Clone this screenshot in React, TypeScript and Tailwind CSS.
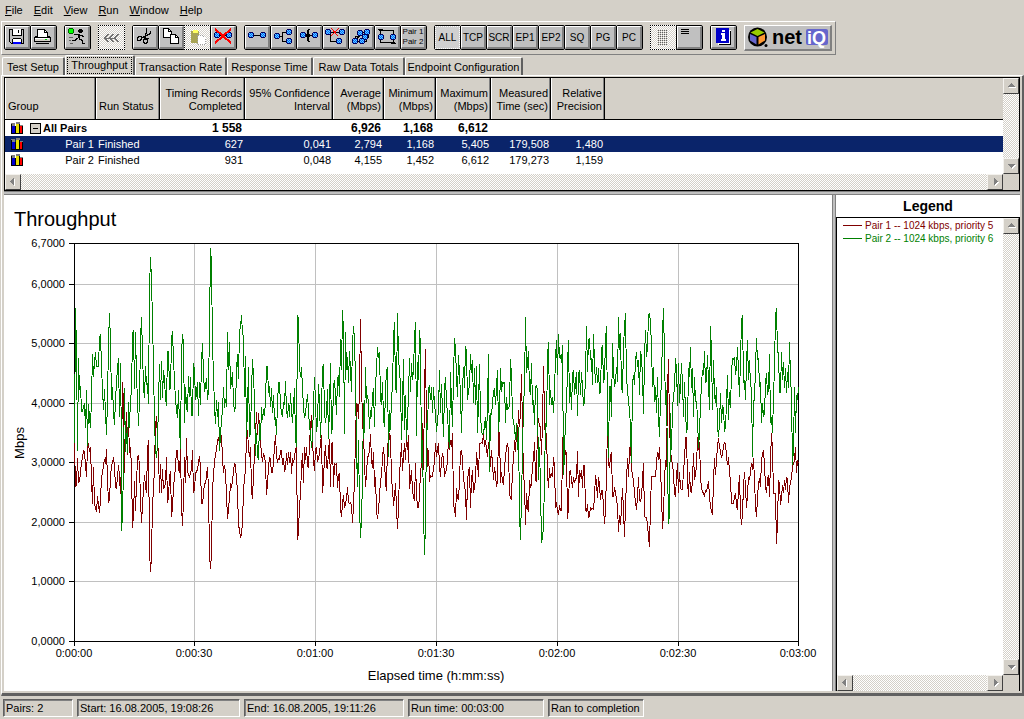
import type { ReactNode } from 'react';
import clsx from 'clsx';

// Each run is [first column, base row, samples]; one sample per column, in thirds of a row
type Run = [number, number, string];

const pair1: Run[] = [
  [74, 200, '730 860 855 775 850 840 820 785 775 750 755 795 832 740 730 755 742 840 912 800 915 922 937 888 915 938'],
  [100, 200, '900 830 820 795 778 793 748 840 908 900 830 795 790 772 800 862 865 830 795 830 883 780'],
  [122, 200, '545 610 818 700 637 765 660 760 740 808 983 945 843 932 855 770 767 795 900 968 920 865 825 862 880 750 720'],
  [149, 200, '1052 1115 1072 905 880 790 680 648 720 765 878 793 880 808 868 860 850 770 908 890 830 812 952 920 865 830'],
  [175, 200, '800 750 750 808 820 745 920 977 900 770 850 715 818 820 835 815 812 750 878 870 820 815 808 790 768 805 908 912 880 850 852 828 800 870'],
  [209, 200, '1065 1108 1060 870 825 785 765 745 725 712 735 725 705 775 820 795 820 880 958 925 895 850 865 840 815 790 795 840 870'],
  [238, 200, '980 985 1015 1000 970 870 835 810 710 690 745 770 740 870 898 820 765 700 637 705 640 680 725 760 785 760 770 790'],
  [266, 200, '885 850 800 770 780 820 815 785 740 705 765 788 775'],
  [279, 280, '540 510 510 555 535 575 565 520 555 515 550 515 583 535 550 530 510 500'],
  [297, 280, '780 755 675 645 560 520 608 500 540 500 555 565 490 440 405 480 545 572 510 500 545 535 520 490 465 638 600 530 495 560 568 510 478'],
  [330, 280, '622 490 488 622 550 555 550 623 585 580 690 710 670 645 685 670 655 622 665 672 668 675 728 675 600 475 370 375 418 330'],
  [360, 280, '117 300 430 460 550 620 580 530 530 508 463 540 565 515 620 590 690 718 690 650 600 590 530 500 540 610 632 490 500 460 470 600 625 677 650 610 685'],
  [397, 280, '748 680 580 545 488 572 530 490 540 468 510 465 628 600 570 635 650 662 550 640 685 680 650 570 560 430 570 330'],
  [425, 280, '207 440 560 510 605 585 590 590 565 545 490 530 510 488 560 590 540 520 535 590 575 570 540 475 510 480 500 460'],
  [453, 280, '675 685 712 625 655 660 600 515 510 540 600 610 640 720 600 575 560 685 600 570 640 620 600 515 550 590 490 490 487 490 460'],
  [484, 280, '500 480 510 530 485 490 560 510 550 600 560 585 620 605 460 455 610 575 605 615 560 530 500 490 510 640 655 660 560 545 480 515 460 480 390 440 395'],
  [521, 280, '283 440 590 610 735 640 680 697 600 625 610 555 540 487 600 605 420 415 440'],
  [540, 280, '440 525 430 258 400 500 460 580 625 565 595 580 590 530 560 685 665 695 705 675 690 690 510'],
  [563, 280, '433 540 510 520 718 680 575 572 600 625 590 610 595 595 512 650 570 590 570 625 555 555 690 695 672 715 705 680 690 685 690 650 585 610 655 590 615 660 630 630 680 733 690 580'],
  [607, 280, '437 550 565 530 515 650 650 620 640 655 680 755 705 735 680 625 690 772 680 600 535 590 515 487 565 585 600 640 665 690 650 590 660 665 650 600 548 710 712 712 735 770'],
  [649, 280, '800 675 590 588 590 590 590 550 515 540 502 570 640 748 700 600 540 560 330'],
  [668, 280, '238 440 510 540 550 580 640 650 590 550 640 575 625 628 628 570 540 475 470 600 650 575 635 637 600 520 600 580 560 470 510 485 590'],
  [701, 280, '625 635 640 650 630 635 620 602 650 680 695 705 600 535 585 540 500 475 500 515 535 520 500 487 490 530 555 530 580 600 670 672 670 650 640 675 690 625 585 700'],
  [741, 280, '735 700 620 575 620 685 640 590 600 575 550 570 535 600 680 712 650 610 595 620 540 525 510 555 620 640 600 585 650 540 460 510 640 640 640'],
  [776, 280, '793 730 600 610 675 650 615 640 600 630 590 600 670 620 610 590 560 550 540 500 580 540 550'],
];

const pair2: Run[] = [
  [74, 200, '730 324 448 752 475 570 558 632 637 618 610 683 570 738 612 655 683 595 462 530 485 457 500 500 500 412 402 500'],
  [102, 200, '570 630 567 640 705 600 425 340 425 600 560 635 675 600 545 505 474 650 490 745'],
  [121, 200, '992 950 800 565 755 700 760 605 683 590 580 400 390 567 395 530 600 678 600 420 352 455 560 595 498 555 550 612'],
  [149, 200, '265 172 240 365 500 665 748 773 735 602 493 600 483 595 510 540 595 618 453 453 568 565 420 392 480 540 600 630 655 570 680 748 465 402 430 668 560 622 635 528 590 530 645 648 490 510 600 580'],
  [197, 200, '545 648 545 615 485 430 520 577 555 535 600 570 385 145 190 440 520 625 672 600 650 607 752 705 660 630 560 625 597 620'],
  [227, 200, '397 510 425 568 545 515 605 636 620 510 462 537 392 380 345 400 412 590 468 710 625 500 712 700 575 478 530 600 768 700 765 780 670 720 620 660 628 647 600'],
  [266, 200, '500 500 580 558 620 565 640 585 660 650 705 610 548'],
  [279, 280, '307 375 400 410 365 375 303 390 415 370 410 340 395 428 375 325 480 500'],
  [297, 280, '105 118 260 290 262 325 380 415 400 370 343 390 440 460 505 470 375 290 365 455 430 312 370 475 385 265 252 400 428 400 328 478 375'],
  [330, 280, '250 463 440 320 300 345 405 295 285 350 178 270 90 150 463 157 270 230 308 213 270 335 190 138 180 300 510 620 480 680'],
  [360, 280, '775 715 600 370 460 262 370 345 370 448 390 410 350 325 442 320 265 202 235 215 355 375 305 415 440 330 270 262 530 390 450 350 325 175 125 320 340'],
  [397, 280, '100 230 280 305 480 370 237 450 345 480 420 345 235 335 250 300 270 175 127 468 245 300 150 195 550 480 700'],
  [424, 280, '825 735 430 450 330 315 360 320 400 320 375 400 455 420 390 270 400 312 390 472 330 290 365 400 465 505 275 365 440 290'],
  [454, 280, '175 205 290 350 225 280 345 458 330 260 325 197 215 360 330 320 222 280 240 370 265 375 258 458 370 252 405 450 465 460 438 410 480 370'],
  [488, 280, '222 575 400 405 370 335 325 375 320 270 455 400 265 335 305 310 305 430 350 390 385 375 237 290 405 430 440 480 430 510 440 700'],
  [520, 280, '780 650 520 370 325 112 280 250 213 325 345 250 375 360 435 320 315 330 600 500'],
  [540, 280, '620 790 770 740 600 430 440 230 187 375 330 375 350 398 330 235 180 285 163 235 225 250 195'],
  [563, 280, '585 525 410 390 255 180 370 310 390 285 270 345 310 275 407 285 270 345 275 320 378 365 290 138 275 180 175 240 235 315 163 250 310 260 310 265 343 335 205 195 310 290 180 138 400'],
  [608, 280, '535 320 320 412 190 270 320 305 260 305 112 210 160 320 340 200 140 100 305 320 375 380 450 550 310 285 315 240 215 260 240 345 212 230 290 403 230 150 230 205 105'],
  [649, 280, '100 125 200 320 262 365 320 400 290 410 472 350 310 155 85 230 375 330 545'],
  [668, 280, '733 700 400 510 385 350 325 235 265 378 250 370 315 250 310 410 305 390 460 440 265 290 202 325 265 410 290 365 365 410 505 455 375'],
  [701, 280, '310 270 285 213 310 300 225 310 390 138 220 390 240 340 370 320 440 470 430 340 430 375 385 455 440 370 285 420 335 385 275 235 240 230 285 260 202 275 350 235'],
  [741, 280, '125 105 310 300 360 250 180 300 240 315 325 530 360 360 260 175 240 235 320 305 430 370 410 400 310 280 345 330 222 430 410 460 350 260 110'],
  [776, 280, '85 215 220 335 340 215 300 245 325 265 340 275 325 187 290 350 555 500 320 460 345 360 320'],
];

const toPoints = (runs: Run[]) =>
  runs
    .flatMap(([x, base, samples]) =>
      samples.split(' ').map((s, i) => `${x + i + 0.5},${(base + Number(s) / 3).toFixed(1)}`)
    )
    .join(' ');

const menus = ['File', 'Edit', 'View', 'Run', 'Window', 'Help'];
const filters = ['ALL', 'TCP', 'SCR', 'EP1', 'EP2', 'SQ', 'PG', 'PC'];

const tabs = [
  { label: 'Test Setup', width: 'w-[63px]' },
  { label: 'Throughput', width: 'w-[70px]', active: true },
  { label: 'Transaction Rate', width: 'w-[92px]' },
  { label: 'Response Time', width: 'w-[86px]' },
  { label: 'Raw Data Totals', width: 'w-[92px]' },
  { label: 'Endpoint Configuration', width: 'w-[118px]' },
];

const columns = [
  { lines: ['Group'], width: 'w-[91px]', left: true },
  { lines: ['Run Status'], width: 'w-[64px]', left: true },
  { lines: ['Timing Records', 'Completed'], width: 'w-[85px]' },
  { lines: ['95% Confidence', 'Interval'], width: 'w-[88px]' },
  { lines: ['Average', '(Mbps)'], width: 'w-[51px]' },
  { lines: ['Minimum', '(Mbps)'], width: 'w-[52px]' },
  { lines: ['Maximum', '(Mbps)'], width: 'w-[55px]' },
  { lines: ['Measured', 'Time (sec)'], width: 'w-[60px]' },
  { lines: ['Relative', 'Precision'], width: 'w-[54px]' },
];

const rows = [
  { name: 'Pair 1', selected: true, values: ['627', '0,041', '2,794', '1,168', '5,405', '179,508', '1,480'] },
  { name: 'Pair 2', selected: false, values: ['931', '0,048', '4,155', '1,452', '6,612', '179,273', '1,159'] },
];

const yTicks = [
  { y: 243, label: '6,7000' },
  { y: 284, label: '6,0000' },
  { y: 343, label: '5,0000' },
  { y: 403, label: '4,0000' },
  { y: 462, label: '3,0000' },
  { y: 522, label: '2,0000' },
  { y: 581, label: '1,0000' },
  { y: 641, label: '0,0000' },
];

const xTicks = [
  { x: 74, label: '0:00:00' },
  { x: 194, label: '0:00:30' },
  { x: 315, label: '0:01:00' },
  { x: 436, label: '0:01:30' },
  { x: 557, label: '0:02:00' },
  { x: 678, label: '0:02:30' },
  { x: 798, label: '0:03:00' },
];

const dither = 'bg-[repeating-conic-gradient(#ffffff_0_25%,#d4d0c8_0_50%)] bg-[length:2px_2px]';

type ToolButtonProps = { label: string; children: ReactNode; disabled?: boolean; pressed?: boolean };

function ToolButton({ label, children, disabled, pressed }: ToolButtonProps) {
  return (
    <button
      type="button"
      aria-label={label}
      aria-pressed={pressed}
      disabled={disabled}
      className={clsx(
        '-mr-px h-[25px] w-[27px] shrink-0 border',
        disabled ? ['border-dotted border-black', dither] : 'rounded-[2px] border-black bg-[#c0c0c0]'
      )}
    >
      <span
        className={clsx(
          'flex h-full w-full items-center justify-center',
          !disabled && !pressed && 'border-t border-r-2 border-b-2 border-l border-t-white border-r-[#808080] border-b-[#808080] border-l-white',
          pressed && 'border border-dotted border-white bg-[#d0d0d0]'
        )}
      >
        {children}
      </span>
    </button>
  );
}

function Icon({ children }: { children: ReactNode }) {
  return (
    <svg width="20" height="20" viewBox="0 0 20 20" fill="none" stroke="#000" shapeRendering="crispEdges" aria-hidden="true">
      {children}
    </svg>
  );
}

// Endpoint node used by all of the pair icons
function Node({ x, y }: { x: number; y: number }) {
  return (
    <g stroke="none" transform={`translate(${x} ${y})`}>
      <path d="M1 0h4v1h1v4h-1v1h-4v-1h-1v-4h1z" fill="#000060" />
      <path d="M1 1h4v4h-4z" fill="#0060ff" />
      <path d="M1 1h1v1h-1zM3 1h1v1h-1zM2 2h1v1h-1zM4 2h1v1h-1zM1 3h1v1h-1zM3 3h1v1h-1zM2 4h1v1h-1zM4 4h1v1h-1z" fill="#60d0ff" />
    </g>
  );
}

function Toolbar() {
  return (
    <div role="toolbar" className="ml-px flex h-[34px] w-[835px] items-start border border-t-white border-r-[#808080] border-b-[#808080] border-l-white pt-[3px] pl-[2px]">
      <div className="mr-2 flex">
        <ToolButton label="Save">
          <Icon>
            <path d="M2 2h15v15h-13l-2-2z" fill="#c0c0c0" stroke="none" />
            <path d="M2.5 2.5h14v14h-12l-2-2z" />
            <path d="M6 2h8v6h-8z" fill="#fff" stroke="none" />
            <path d="M5.5 3v5.500h8.500v-5.500M11.500 3v3M6 11.500h8M5.500 12v4M14.500 12v4" />
            <path d="M6 12h8v3h-8z" fill="#fff" stroke="none" />
            <path d="M6 15h8v2h-8z" fill="#00f" stroke="none" />
          </Icon>
        </ToolButton>
        <ToolButton label="Print">
          <Icon>
            <path d="M4.5 10.5v-8h7l3 3v5z" fill="#fff" />
            <path d="M11.5 2.5v3h3" />
            <path d="M1.5 10.5h16v4h-16z" fill="#d4d0c8" />
            <path d="M1.5 10.5l3-2M17.5 10.5l-3-2M3 16.5h13" />
            <path d="M2 11.5h14" stroke="#fff" />
            <path d="M12 12.5h2" stroke="#0c0" />
          </Icon>
        </ToolButton>
      </div>
      <div className="mr-2 flex">
        <ToolButton label="Run">
          <Icon>
            <path d="M2 1h4v1h1v4h-1v1h-4v-1h-1v-4h1z" fill="#006000" stroke="none" />
            <path d="M2 2h4v4h-4z" fill="#0f0" stroke="none" />
            <path d="M12 2h3v1h1v2h-1v1h-3v-1h-1v-2h1z" fill="#000" stroke="none" />
            <path d="M7 7.5h5M11.5 7v4M12.5 7v5M13 8.500h2v1h2M11 11.500h-2v1h-1v1h-3M12 12.500h2v1h1v3h3" />
            <path d="M2 10.5h4M4 13.5h-2M3 16.5h3" stroke="#606060" />
          </Icon>
        </ToolButton>
      </div>
      <div className="mr-2 flex">
        <ToolButton label="Stop" disabled>
          <Icon>
            <path d="M6.5 6l-4 4l4 4M11.5 6l-4 4l4 4M16.500 6l-4 4l4 4M2 10h12" stroke="#707070" />
          </Icon>
        </ToolButton>
      </div>
      <div className="mr-2 flex">
        <ToolButton label="Cut">
          <Icon>
            <path d="M11.5 1v5h-1v4h-1v2M15.500 4v2h-1v1h-2v1h-2v1h-2v1h-2" />
            <path d="M3 9.500h2M5 9.500h1.500v3h-1v1h-2.500h-1v-2.500zM9 12.500h3v3h-1v1h-2v-1h-1v-2.500zM10 11.500h4" />
          </Icon>
        </ToolButton>
        <ToolButton label="Copy">
          <Icon>
            <path d="M2.5 1.5h5l3 3v6h-8z" fill="#fff" />
            <path d="M7.5 1.5v3h3" />
            <path d="M9.5 7.5h5l3 3v6h-8z" fill="#fff" />
            <path d="M14.5 7.5v3h3" />
          </Icon>
        </ToolButton>
        <ToolButton label="Paste" disabled>
          <Icon>
            <path d="M3 3h8v12h-8z" fill="#a8a454" stroke="none" />
            <path d="M5 2h5v3h-5z" fill="#ffff60" stroke="none" />
            <path d="M9.5 7.5h5l3 3v6h-8z" fill="#fff" stroke="#a0a0a0" strokeDasharray="1 1" />
          </Icon>
        </ToolButton>
        <ToolButton label="Delete">
          <Icon>
            <path d="M5 8.5h10" />
            <Node x={1} y={5} />
            <Node x={13} y={5} />
            <path d="M2 2l16 14M18 2l-16 14" stroke="#f00" strokeWidth="2" />
          </Icon>
        </ToolButton>
      </div>
      <div className="mr-2 flex">
        <ToolButton label="Add pair">
          <Icon>
            <path d="M6 8.5h9" />
            <Node x={1} y={5} />
            <Node x={13} y={5} />
          </Icon>
        </ToolButton>
        <ToolButton label="Add multicast group">
          <Icon>
            <path d="M6 9.5h4M13 5.5h-3.500v9h3.500" />
            <Node x={1} y={6} />
            <Node x={13} y={2} />
            <Node x={13} y={11} />
          </Icon>
        </ToolButton>
        <ToolButton label="Add hardware pair">
          <Icon>
            <path d="M6 8.5h9" />
            <path d="M9 2h2v1h-1v4h1v3h-1v4h1v1h-2v-1h-1v-4h-1v-3h1v-4h1z" fill="#000" stroke="none" />
            <Node x={1} y={5} />
            <Node x={13} y={5} />
          </Icon>
        </ToolButton>
        <ToolButton label="Delete endpoint">
          <Icon>
            <path d="M6 5.500h9M5.500 7v7.500h6" />
            <Node x={0} y={2} />
            <Node x={14} y={2} />
            <Node x={11} y={11} />
            <path d="M6 1l7 8M14 1l-8 8" stroke="#f00" />
          </Icon>
        </ToolButton>
        <ToolButton label="Replicate pairs">
          <Icon>
            <path d="M4.500 12v-3h4v-4h7M6 14.500h9v-4h2v-5M6 12l4-6" />
            <Node x={6} y={3} />
            <Node x={13} y={2} />
            <Node x={11} y={7} />
            <Node x={1} y={11} />
            <Node x={8} y={11} />
          </Icon>
        </ToolButton>
        <ToolButton label="Swap endpoints">
          <Icon>
            <path d="M3.5 7v-3.500h13v4M16.500 12v3.500h-13v-3" />
            <path d="M1 2h5v1h-1v1h-1v1h-1v-1h-1v-1h-1zM14 17h5v-1h-1v-1h-1v-1h-1v1h-1v1h-1z" fill="#000" stroke="none" />
            <Node x={1} y={7} />
            <Node x={13} y={7} />
          </Icon>
        </ToolButton>
        <ToolButton label="Renumber pairs">
          <span className="text-[8px] leading-[10px] whitespace-nowrap">
            Pair 1
            <br />
            Pair 2
          </span>
        </ToolButton>
      </div>
      <div className="mr-2 flex">
        {filters.map((name) => (
          <ToolButton key={name} label={name} pressed={name === 'ALL'}>
            <span className="text-[10px]">{name}</span>
          </ToolButton>
        ))}
      </div>
      <div className="mr-2 flex">
        <ToolButton label="Show details" disabled>
          <Icon>
            <path d="M4 2.5h9M4 4.5h9M4 6.5h9M4 8.5h9M4 10.5h9M4 12.5h9M4 14.5h9M4 16.5h9" stroke="#606060" strokeDasharray="1 1" />
          </Icon>
        </ToolButton>
        <ToolButton label="Show summary">
          <Icon>
            <path d="M2 2.5h8M2 4.5h8M2 6.5h8" />
          </Icon>
        </ToolButton>
      </div>
      <div className="mr-2 flex">
        <ToolButton label="About">
          <Icon>
            <path d="M5 3h13v15h-13z" fill="#fff" stroke="none" />
            <path d="M17.5 4v13.500h-12" />
            <path d="M3 1h13v15h-13z" fill="#0000c8" stroke="none" />
            <path d="M9 3h3v2h-3zM8 6h4v6h1v2h-5v-2h1v-4h-1z" fill="#fff" stroke="none" />
          </Icon>
        </ToolButton>
      </div>
      <Logo />
    </div>
  );
}

function Logo() {
  return (
    <div className="h-[26px] w-[88px] shrink-0 border-t border-r-2 border-b-2 border-l border-t-white border-r-[#808080] border-b-[#808080] border-l-white bg-[#c0c0c0]">
      <svg className="block overflow-visible" width="85" height="23" viewBox="0 0 85 23" role="img" aria-label="netIQ">
        <circle cx="12.500" cy="11" r="9.500" fill="#000" />
        <path d="M12.500 3l7 3.500l-7 3.500l-7-3.500z" fill="#9c0" />
        <path d="M5 8l6.500 3v7.500l-6.500-4z" fill="#66c" />
        <path d="M20 8l-6.500 3v7.500l6.500-4z" fill="#f93" />
        <circle cx="21" cy="19.500" r="1.500" fill="#000" />
        <text x="27" y="18" fontSize="20" fontWeight="700" fill="#000">net</text>
        <rect x="61" y="3" width="22" height="16" rx="2" fill="#66c" />
        <text x="62" y="18" fontSize="18" fontWeight="700" fill="#fff">iQ</text>
      </svg>
    </div>
  );
}

const arrows = {
  up: 'M4 8h7v-1h-1v-1h-1v-1h-1v-1h-1v1h-1v1h-1v1h-1z',
  down: 'M4 5h7v1h-1v1h-1v1h-1v1h-1v-1h-1v-1h-1v-1h-1z',
  left: 'M8 3v7h-1v-1h-1v-1h-1v-1h-1v-1h1v-1h1v-1h1v-1z',
  right: 'M6 3v7h1v-1h1v-1h1v-1h1v-1h-1v-1h-1v-1h-1v-1z',
};

function ScrollButton({ dir }: { dir: keyof typeof arrows }) {
  return (
    <button
      type="button"
      aria-label={`Scroll ${dir}`}
      className="h-4 w-4 shrink-0 border border-t-[#f4f2ee] border-r-[#404040] border-b-[#404040] border-l-[#f4f2ee] bg-[#d4d0c8]"
    >
      <svg className="block" width="14" height="14" viewBox="0 0 14 14" shapeRendering="crispEdges" aria-hidden="true">
        <path d={arrows[dir]} fill="#fff" transform="translate(1 1)" />
        <path d={arrows[dir]} fill="#808080" />
      </svg>
    </button>
  );
}

function VScroll() {
  return (
    <div className={clsx('flex w-4 flex-1 flex-col justify-between', dither)}>
      <ScrollButton dir="up" />
      <ScrollButton dir="down" />
    </div>
  );
}

function HScroll() {
  return (
    <div className={clsx('flex h-4 shrink-0 justify-between', dither)}>
      <ScrollButton dir="left" />
      <ScrollButton dir="right" />
    </div>
  );
}

function BarsIcon() {
  return (
    <svg className="ml-[5px] shrink-0" width="14" height="14" viewBox="0 0 14 14" shapeRendering="crispEdges" aria-hidden="true">
      <path d="M1 2h4v3h1v-4h4v3h3v8h-12z" fill="#808080" />
      <path d="M1 3h1v9h11v1h-12z" fill="#000" />
      <path d="M2 5h3v7h-3z" fill="#0000d0" />
      <path d="M6 3h3v9h-3z" fill="#e8e000" />
      <path d="M10 5h2v7h-2z" fill="#f00" />
      <path d="M5 5h1v7h-1zM9 3h1v9h-1zM12 5h1v7h-1z" fill="#000" />
    </svg>
  );
}

function ResultsTable() {
  return (
    <table className="w-full table-fixed border-separate border-spacing-0 leading-[16px]">
      <thead>
        <tr className="bg-[#d4d0c8]">
          {columns.map((col) => (
            <th
              key={col.lines[0]}
              scope="col"
              className={clsx(
                'border-r border-b border-black p-0 align-bottom font-normal whitespace-nowrap',
                col.width,
                col.left ? 'text-left' : 'text-right'
              )}
            >
              <div className="flex h-[41px] flex-col justify-end border-r border-l border-r-[#808080] border-l-white pr-px pb-[6px] pl-[2px] leading-[13px]">
                {col.lines.map((line) => (
                  <span key={line}>{line}</span>
                ))}
              </div>
            </th>
          ))}
          <th aria-hidden="true" className="border-b border-black p-0" />
        </tr>
      </thead>
      <tbody>
        <tr className="h-4 font-bold">
          <td className="p-0">
            <div className="flex h-4 items-center">
              <BarsIcon />
              <button
                type="button"
                aria-label="Collapse All Pairs"
                className="mr-[2px] ml-[6px] flex h-[11px] w-[11px] items-center justify-center border border-black bg-[#d4d0c8]"
              >
                <span className="h-px w-[5px] bg-black" />
              </button>
              <span className="whitespace-nowrap">All Pairs</span>
            </div>
          </td>
          <td className="p-0" />
          <td className="p-0 pr-[3px] text-right text-[12px]">1 558</td>
          <td className="p-0" />
          <td className="p-0 pr-[3px] text-right text-[12px]">6,926</td>
          <td className="p-0 pr-[3px] text-right text-[12px]">1,168</td>
          <td className="p-0 pr-[3px] text-right text-[12px]">6,612</td>
          <td colSpan={3} className="p-0" />
        </tr>
        {rows.map((row) => (
          <tr key={row.name} className={clsx('h-4', row.selected && 'bg-[#0a246a] text-white')}>
            <td className="p-0">
              <div className="flex h-4 items-center justify-between pr-[2px]">
                <BarsIcon />
                {row.name}
              </div>
            </td>
            <td className="p-0 pl-[2px]">Finished</td>
            {row.values.map((value, i) => (
              <td key={i} className="p-0 pr-[2px] text-right">
                {value}
              </td>
            ))}
            <td className="p-0" />
          </tr>
        ))}
      </tbody>
    </table>
  );
}

function ThroughputChart() {
  return (
    <svg className="block h-auto w-full" viewBox="4 195 828 496" role="img" aria-label="Throughput over elapsed time">
      <text x="14" y="226" fontSize="20">Throughput</text>
      <g shapeRendering="crispEdges" fill="none">
        <g stroke="#c0c0c0">
          {yTicks.slice(1, -1).map(({ y }) => (
            <path key={y} d={`M75 ${y + 0.5}H799`} />
          ))}
          {xTicks.slice(1, -1).map(({ x }) => (
            <path key={x} d={`M${x + 0.5} 244V641`} />
          ))}
        </g>
        <g stroke="#000">
          <path d="M74.5 243.5H798.5V641.5H74.5z" />
          {yTicks.map(({ y }) => (
            <path key={y} d={`M69 ${y + 0.5}H74`} />
          ))}
          {xTicks.map(({ x }) => (
            <path key={x} d={`M${x + 0.5} 642V646`} />
          ))}
        </g>
        <polyline points={toPoints(pair1)} stroke="#800000" strokeLinejoin="bevel" />
        <polyline points={toPoints(pair2)} stroke="#008000" strokeLinejoin="bevel" />
      </g>
      <g fontSize="11">
        {yTicks.map(({ y, label }) => (
          <text key={y} x="65" y={y + 4} textAnchor="end">{label}</text>
        ))}
        {xTicks.map(({ x, label }) => (
          <text key={x} x={x} y="657" textAnchor="middle">{label}</text>
        ))}
      </g>
      <text x="436" y="680" fontSize="13" textAnchor="middle">Elapsed time (h:mm:ss)</text>
      <text transform="translate(24 443) rotate(-90)" fontSize="13" textAnchor="middle">Mbps</text>
    </svg>
  );
}

function Legend() {
  return (
    <aside className="flex w-[184px] shrink-0 flex-col bg-white">
      <h2 className="h-[22px] text-center text-[14px] leading-[22px] font-bold">Legend</h2>
      <div className="flex flex-1 border-x border-t border-black">
        <div className="flex min-w-0 flex-1 flex-col">
          <ul className="flex-1 pt-px pl-[6px] text-[10px] leading-[13px] whitespace-nowrap">
            <li className="flex items-center gap-[3px] text-[#800000]">
              <span className="h-px w-[19px] bg-[#800000]" />
              Pair 1 -- 1024 kbps, priority 5
            </li>
            <li className="flex items-center gap-[3px] text-[#008000]">
              <span className="h-px w-[19px] bg-[#008000]" />
              Pair 2 -- 1024 kbps, priority 6
            </li>
          </ul>
          <HScroll />
        </div>
        <div className="flex flex-col">
          <VScroll />
          <div className="h-4 w-4 bg-[#d4d0c8]" />
        </div>
      </div>
    </aside>
  );
}

function StatusCell({ width, children }: { width: string; children: ReactNode }) {
  return (
    <div
      className={clsx(
        'h-[18px] border border-t-[#606060] border-r-white border-b-white border-l-[#606060] pl-[2px] leading-[17px] whitespace-nowrap shadow-[inset_1px_1px_0_#808080]',
        width
      )}
    >
      {children}
    </div>
  );
}

export default function App() {
  return (
    <div className="flex min-h-screen flex-col bg-[#d4d0c8] font-['Liberation_Sans',Arial,sans-serif] text-[11px] text-black">
      <nav className="flex h-[21px] items-center gap-[11px] pl-[5px]">
        {menus.map((name) => (
          <button key={name} type="button">
            <span className="underline">{name[0]}</span>
            {name.slice(1)}
          </button>
        ))}
      </nav>

      <Toolbar />

      <div role="tablist" className="flex h-5 items-end pl-[2px]">
        {tabs.map((tab) => (
          <button
            key={tab.label}
            type="button"
            role="tab"
            aria-selected={!!tab.active}
            className={clsx(
              'shrink-0 rounded-t-[2px] border-t border-r-2 border-l border-t-white border-r-[#606060] border-l-white whitespace-nowrap',
              tab.width,
              tab.active ? 'h-5 p-px' : 'h-[18px] pt-px'
            )}
          >
            {tab.active ? <span className="block h-[17px] border border-dotted border-black leading-[15px]">{tab.label}</span> : tab.label}
          </button>
        ))}
      </div>

      <main className="ml-px flex flex-1 flex-col border-t border-r-2 border-b-3 border-l border-t-white border-r-[#606060] border-b-[#606060] border-l-white pt-px pr-[2px] pb-[2px] pl-[2px]">
        <section className="flex h-[114px] shrink-0 border border-black bg-white">
          <div className="flex min-w-0 flex-1 flex-col justify-between">
            <ResultsTable />
            <HScroll />
          </div>
          <div className="flex flex-col">
            <VScroll />
            <div className="h-4 w-4 bg-[#d4d0c8]" />
          </div>
        </section>

        <div className="h-1 shrink-0 border-y border-[#808080] bg-[#c0c0c0]" />

        <div className="flex flex-1">
          <section className="min-w-0 flex-1 bg-white">
            <ThroughputChart />
          </section>
          <div className="w-1 shrink-0 border-x border-[#808080] bg-[#c0c0c0]" />
          <Legend />
        </div>
      </main>

      <footer className="flex gap-1 pt-[3px] pb-[2px] pl-[3px]">
        <StatusCell width="w-[70px]">Pairs: 2</StatusCell>
        <StatusCell width="w-[163px]">Start: 16.08.2005, 19:08:26</StatusCell>
        <StatusCell width="w-[160px]">End: 16.08.2005, 19:11:26</StatusCell>
        <StatusCell width="w-[136px]">Run time: 00:03:00</StatusCell>
        <StatusCell width="w-[96px]">Ran to completion</StatusCell>
      </footer>
    </div>
  );
}
